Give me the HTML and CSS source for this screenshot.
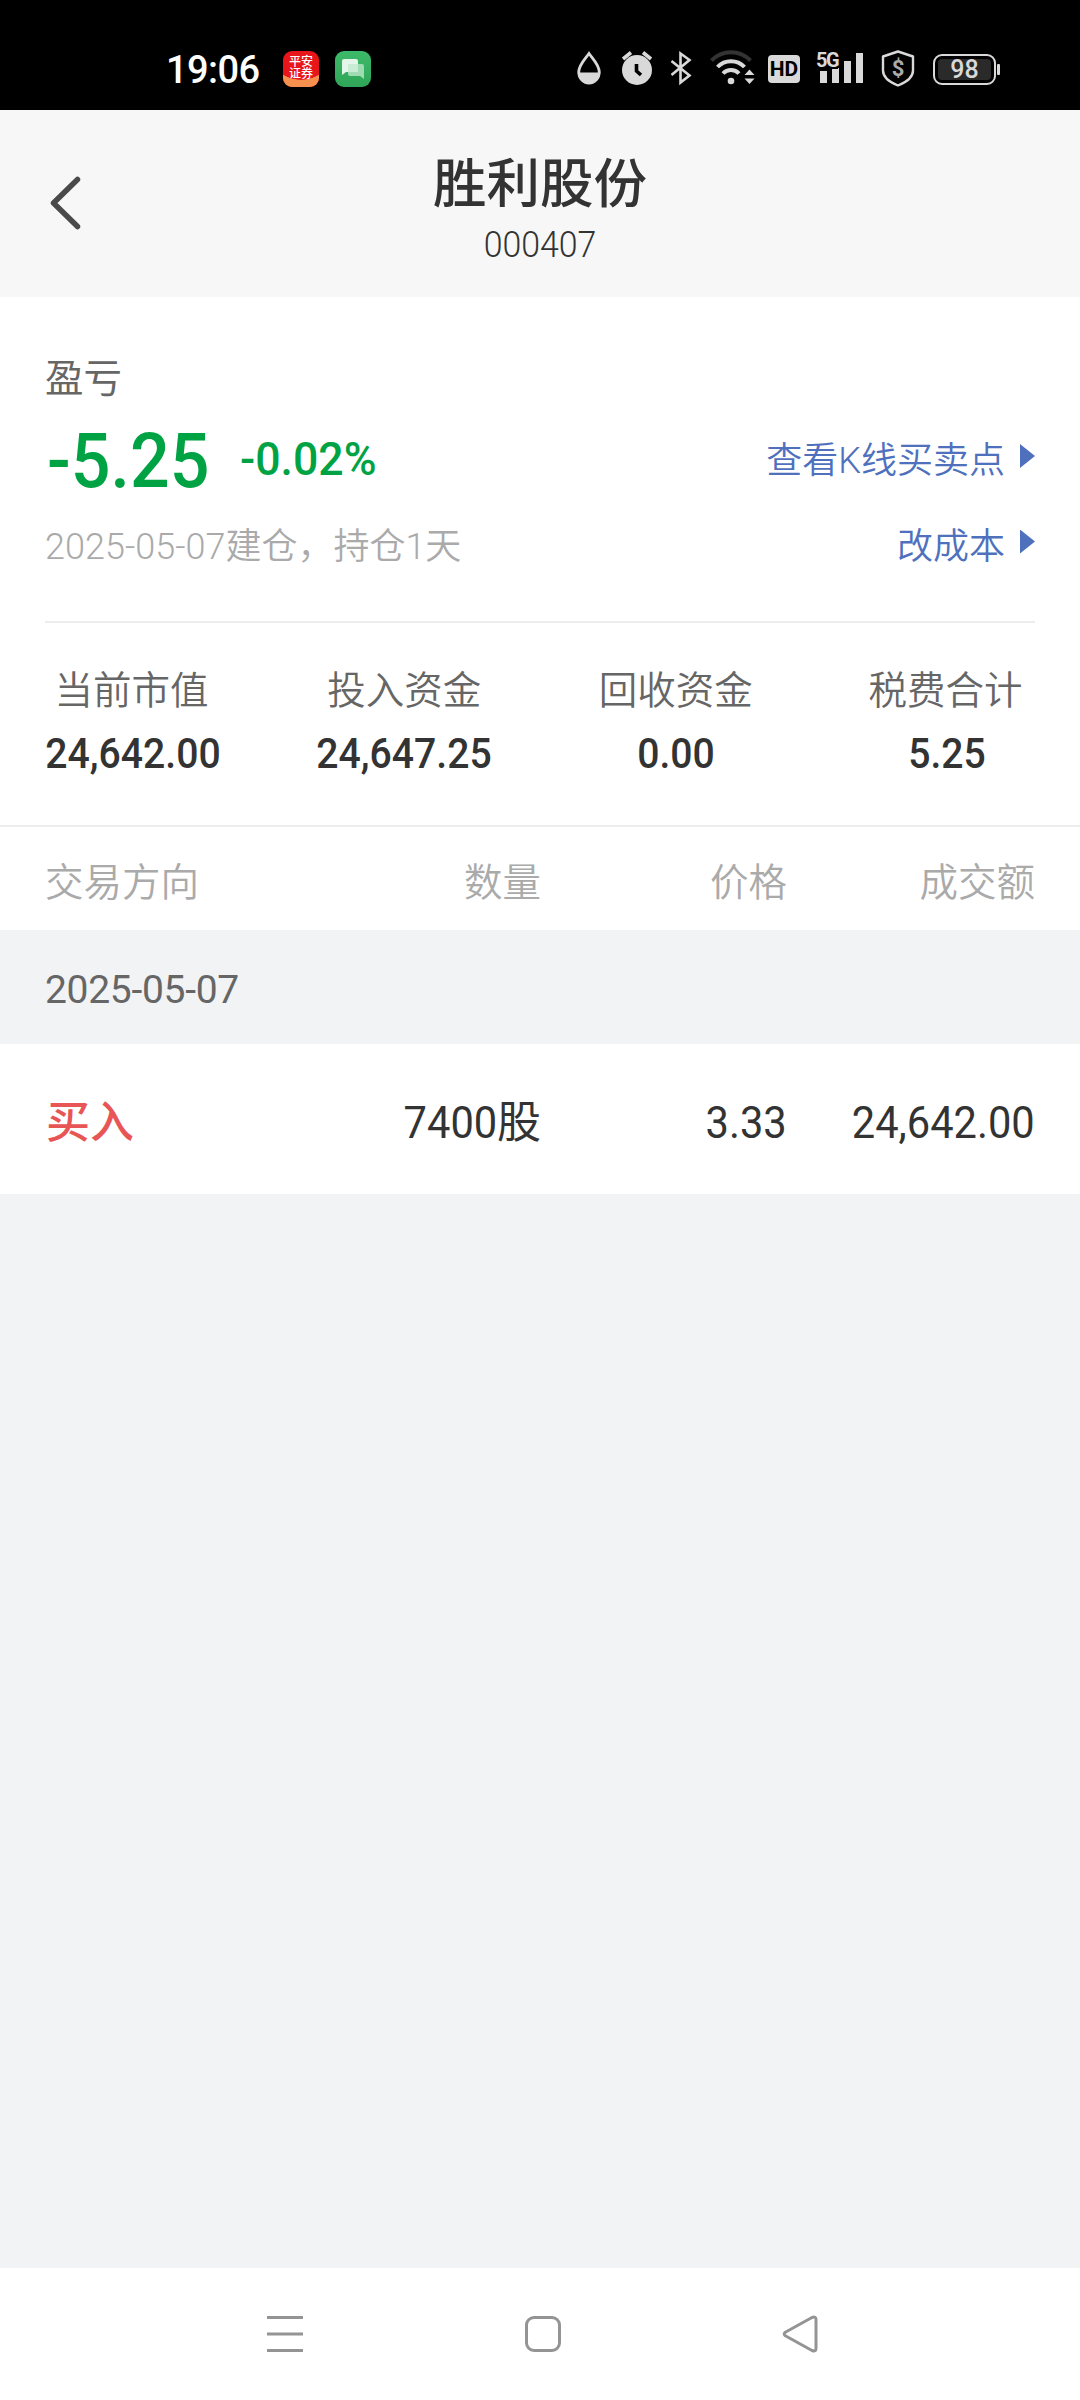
FILE: index.html
```html
<!DOCTYPE html>
<html lang="zh-CN">
<head>
<meta charset="utf-8">
<title>胜利股份</title>
<link rel="stylesheet" href="styles.css">
</head>
<body>
<div class="screen">
  <div class="status">
    <span class="clock">19:06</span>
    <div class="apps">
      <span class="app app-stock"><i></i><b>平安<br>证券</b></span>
      <svg class="app" viewBox="0 0 36 36"><defs><linearGradient id="g" x2="0" y2="1"><stop stop-color="#3dba69"/><stop offset="1" stop-color="#2fa557"/></linearGradient></defs><rect width="36" height="36" rx="9" fill="url(#g)"/><path d="M13 13h14q2 0 2 2v13l-4-3H15q-2 0-2-2z" fill="#9fdcb3"/><path d="M9 8h12q2 0 2 2v9q0 2-2 2H11l-4 3V10q0-2 2-2z" fill="#e4f5e9"/><path d="M13 13h10v6q0 2-2 2h-8z" fill="#c9ecd4"/></svg>
    </div>
    <div class="icons">
      <svg class="drop" viewBox="0 0 24 40"><path d="M12 4.500C8 10 1.700 16 1.700 23a10.300 11 0 0 0 20.600 0C22.300 16 16 10 12 4.500z" fill="none" stroke="#d9d9d9" stroke-width="2.800"/><path d="M1 23.500h22a11 11.500 0 0 1-22 0z" fill="#d9d9d9"/></svg>
      <svg class="alarm" viewBox="0 0 32 40"><circle cx="16" cy="21" r="15" fill="#d9d9d9"/><path d="M2 10l8-6.500M30 10l-8-6.500" stroke="#d9d9d9" stroke-width="3.600"/><path d="M15.500 15v7l4.500 4" fill="none" stroke="#000" stroke-width="3.600"/></svg>
      <svg class="bt" viewBox="0 0 22 40"><path d="M1.500 12l18 14.500L10.500 33.500V4.500L19.500 11 1.500 26" fill="none" stroke="#d9d9d9" stroke-width="2.600"/></svg>
      <svg class="wifi" viewBox="0 0 46 40"><g fill="none" stroke-width="4"><path d="M1.500 11.500a27 27 0 0 1 39 0" stroke="#333"/><path d="M7.500 18a18.500 18.500 0 0 1 27 0M13 24.500a11 11 0 0 1 16 0" stroke="#d9d9d9"/></g><circle cx="21" cy="32" r="3.300" fill="#d9d9d9"/><path d="M34.500 26l5-5.500 5 5.500zM34.500 29.500l5 5.500 5-5.500z" fill="#d9d9d9"/></svg>
      <span class="hd">HD</span>
      <span class="signal"><svg viewBox="0 0 46 40"><path d="M3 22h7v12H3zM15 19h7v15h-7zM27 12h7v22h-7zM39 4h7v30h-7z" fill="#d9d9d9"/></svg><em>5G</em></span>
      <span class="shield"><svg viewBox="0 0 34 40"><path d="M17 2.500l15 5v14c0 7-6 11.500-15 15-9-3.500-15-8-15-15v-14z" fill="none" stroke="#d9d9d9" stroke-width="2.400" stroke-linejoin="round"/></svg><em>$</em></span>
      <span class="battery"><em>98</em></span>
    </div>
  </div>

  <header class="header">
    <svg class="back" viewBox="0 0 40 60"><path d="M33.500 6.500L9.500 30l24 23.500" fill="none"/></svg>
    <div class="name">胜利股份</div>
    <div class="code">000407</div>
  </header>

  <section class="summary">
    <div class="label">盈亏</div>
    <div class="row profit">
      <span class="amount">-5.25</span><span class="rate">-0.02%</span>
      <a class="link">查看K线买卖点<i class="tri"></i></a>
    </div>
    <div class="row opened">
      <span>2025-05-07建仓，持仓1天</span>
      <a class="link">改成本<i class="tri"></i></a>
    </div>
    <div class="stats">
      <div><span>当前市值</span><strong>24,642.00</strong></div>
      <div><span>投入资金</span><strong>24,647.25</strong></div>
      <div><span>回收资金</span><strong>0.00</strong></div>
      <div><span>税费合计</span><strong>5.25</strong></div>
    </div>
  </section>

  <div class="cols head"><span>交易方向</span><span>数量</span><span>价格</span><span>成交额</span></div>
  <div class="day">2025-05-07</div>
  <div class="cols trade"><span class="buy">买入</span><span><b class="num">7400</b>股</span><span><b class="num">3.33</b></span><span><b class="num">24,642.00</b></span></div>

  <nav class="nav">
    <svg viewBox="0 0 40 40"><path d="M2 3.500h36M2 20h36M2 36.500h36"/></svg>
    <svg viewBox="0 0 40 40"><rect x="3.500" y="3.500" width="33" height="33" rx="7.500"/></svg>
    <svg viewBox="0 0 40 40"><path d="M5.300 18.200Q3 20 5.300 21.800L32 36.500Q36 38 36 34.500V5.500Q36 2 32 3.500z"/></svg>
  </nav>
</div>
</body>
</html>
```
FILE: styles.css
```css
* { box-sizing: border-box; }
body {
  margin: 0;
  font-family: Roboto, "Noto Sans CJK SC", sans-serif;
  color: #333;
}
em, i { font-style: normal; }
.screen {
  width: 1080px;
  height: 2400px;
  display: flex;
  flex-direction: column;
  background: #f2f3f5;
}

/* system status bar */
.status {
  height: 110px;
  padding: 28px 79px 0 166px;
  display: flex;
  align-items: center;
  background: #000;
  color: #fff;
}
.clock { width: 117px; padding-top: 1px; font: 500 38px/40px Roboto, sans-serif; letter-spacing: -0.6px; }
.apps { display: flex; gap: 16px; }
.app { width: 36px; height: 36px; display: block; }
.app-stock {
  position: relative;
  padding-top: 4px;
  border-radius: 9px;
  background: #e8151b;
  text-align: center;
}
.app-stock b {
  position: relative;
  display: block;
  font: 500 12px/11.500px "Noto Sans CJK SC", sans-serif;
}
.app-stock i {
  position: absolute;
  inset: 0;
  border-radius: 9px;
  background: radial-gradient(ellipse 32px 29px at 18px 0, transparent 98%, #f5904f 100%);
}
.icons { margin-left: auto; display: flex; align-items: center; color: #d9d9d9; }
.icons svg { display: block; height: 40px; }
.drop { width: 24px; }
.alarm { width: 32px; margin-left: 20px; }
.bt { width: 22px; margin-left: 17px; }
.wifi { width: 46px; margin-left: 18px; }
.hd {
  width: 32px;
  height: 28px;
  margin-left: 12px;
  border-radius: 4px;
  background: #d9d9d9;
  color: #000;
  font: 700 21px/28px Roboto, sans-serif;
  text-align: center;
}
.signal { position: relative; width: 46px; margin-left: 17px; }
.signal em {
  position: absolute;
  left: -1px;
  top: 2px;
  font: 700 20px/18px Roboto, sans-serif;
  letter-spacing: -1.500px;
  background: #000;
}
.shield { position: relative; width: 34px; margin-left: 18px; }
.shield em {
  position: absolute;
  inset: 0;
  font: 700 22px/39px Roboto, sans-serif;
  text-align: center;
  color: #aaa;
}
.battery {
  position: relative;
  width: 63px;
  height: 31px;
  margin: 0 5px 0 18px;
  padding: 3px;
  border: 2px solid #d9d9d9;
  border-radius: 9px;
}
.battery em {
  display: block;
  height: 21px;
  border-radius: 4px;
  background: #2a2a2a;
  font: 500 25px/22px Roboto, sans-serif;
  text-align: center;
}
.battery::after {
  content: "";
  position: absolute;
  right: -6px;
  top: 8px;
  width: 3px;
  height: 11px;
  border-radius: 1px;
  background: #d9d9d9;
}

/* title bar */
.header {
  position: relative;
  height: 187px;
  padding-top: 43px;
  background: #f7f7f7;
  text-align: center;
}
.back { position: absolute; left: 44px; top: 63px; width: 40px; height: 60px; }
.back path { stroke: #4a4a4a; stroke-width: 5.500; stroke-linecap: round; stroke-linejoin: round; }
.name { font-size: 53.500px; line-height: 64px; font-weight: 500; }
.code { font-size: 36px; line-height: 56px; font-weight: 350; transform: scaleX(.94); }

/* position summary */
.summary { background: #fff; padding: 56px 45px 0; height: 528px; }
.label { font-size: 38.500px; line-height: 52px; color: #666; }
.row { display: flex; align-items: center; }
.profit { height: 108px; color: #00a344; font-weight: 500; }
.amount { width: 160px; margin: 3px 0 0 2px; font-size: 76px; transform: scaleX(.92); transform-origin: left; }
.rate { margin: 0 0 1px 33px; font-size: 46px; transform: scaleX(.97); transform-origin: left; }
.opened { height: 64px; padding-bottom: 5px; font-size: 36px; font-weight: 350; color: #aaa; }
.link {
  margin: -4px 0 0 auto;
  display: flex;
  align-items: center;
  gap: 15px;
  font-size: 36px;
  font-weight: 350;
  color: #4f71bd;
}
.opened .link { margin-top: 0; }
.tri {
  width: 15px;
  height: 24px;
  margin-top: -2px;
  background: #4f71bd;
  clip-path: polygon(0 0, 100% 50%, 0 100%);
}
.stats {
  margin-top: 44px;
  padding-top: 40px;
  border-top: 2px solid #ecedee;
  display: grid;
  grid-template-columns: repeat(4, 176px);
  justify-content: space-between;
  text-align: center;
}
.stats span { display: block; font-size: 38.500px; line-height: 56px; font-weight: 350; color: #666; }
.stats div:last-child span, .stats div:first-child span { margin-left: -3px; }
.stats strong {
  display: block;
  width: 196px;
  margin-left: -10px;
  font-size: 43px;
  line-height: 68px;
  font-weight: 500;
  transform: scaleX(.91);
}

/* trade list */
.cols {
  display: grid;
  grid-template-columns: 200px 296px 246px 248px;
  align-items: center;
  padding: 0 45px;
  background: #fff;
  text-align: right;
}
.cols span:first-child { text-align: left; }
.head { height: 105px; border-top: 2px solid #ecedee; font-size: 38.500px; font-weight: 350; color: #aaa; }
.day {
  height: 114px;
  padding-left: 45px;
  font-size: 39px;
  line-height: 120px;
  letter-spacing: -0.3px;
  color: #666;
}
.trade { height: 150px; padding-top: 8px; font-size: 44px; line-height: 60px; }
.num { display: inline-block; font-size: 45px; font-weight: 400; transform: scaleX(.925); transform-origin: right; }
.trade .buy { font-weight: 500; color: #e85555; padding-left: 1px; }

/* system navigation */
.nav {
  margin-top: auto;
  height: 132px;
  padding: 0 260px 0 265px;
  display: flex;
  align-items: center;
  justify-content: space-between;
  background: #fff;
}
.nav svg { width: 40px; height: 40px; fill: none; stroke: #949494; stroke-width: 3; stroke-linejoin: round; }
```
